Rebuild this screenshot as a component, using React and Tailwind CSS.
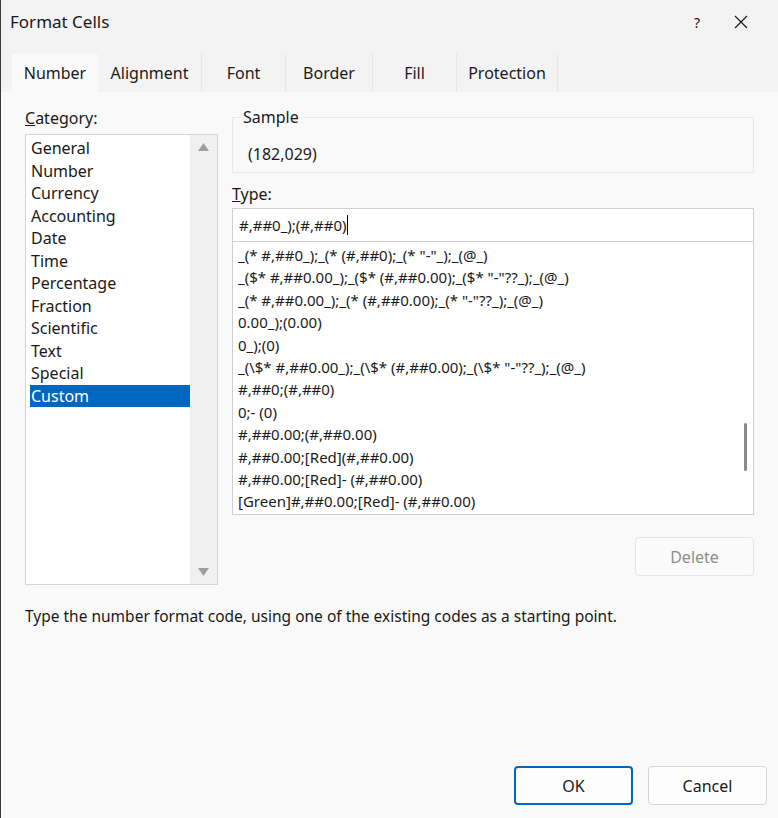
export default function App() {
  const cats = ['General', 'Number', 'Currency', 'Accounting', 'Date', 'Time', 'Percentage', 'Fraction', 'Scientific', 'Text', 'Special', 'Custom']
  const types = [
    '_(* #,##0_);_(* (#,##0);_(* "-"_);_(@_)',
    '_($* #,##0.00_);_($* (#,##0.00);_($* "-"??_);_(@_)',
    '_(* #,##0.00_);_(* (#,##0.00);_(* "-"??_);_(@_)',
    '0.00_);(0.00)',
    '0_);(0)',
    '_(\\$* #,##0.00_);_(\\$* (#,##0.00);_(\\$* "-"??_);_(@_)',
    '#,##0;(#,##0)',
    '0;- (0)',
    '#,##0.00;(#,##0.00)',
    '#,##0.00;[Red](#,##0.00)',
    '#,##0.00;[Red]- (#,##0.00)',
    '[Green]#,##0.00;[Red]- (#,##0.00)',
  ]
  const tabs = [['Alignment', 'w-[104px]'], ['Font', 'w-[84px]'], ['Border', 'w-[87px]'], ['Fill', 'w-[84px]'], ['Protection', 'w-[101px]']]

  return (
    <div className="w-[778px] h-[818px] bg-[#f9f9f9] text-[#1a1a1a] text-[16px] font-['Open_Sans',sans-serif] border-l border-[#3a3a3a] overflow-hidden flex flex-col">
      {/* Title bar */}
      <div className="h-[44px] flex items-center bg-[#f3f3f3] shrink-0">
        <span className="pl-[9px] text-[17px]">Format Cells</span>
        <span className="ml-auto text-[14px] w-[60px] text-center">?</span>
        <svg width="14" height="14" viewBox="0 0 14 14" className="mr-[30px] ml-[7px]">
          <path d="M1 1L13 13M13 1L1 13" stroke="#1a1a1a" strokeWidth="1.2" />
        </svg>
      </div>

      {/* Tabs */}
      <div className="flex pl-[11px] pt-[10px] h-[48px] shrink-0 bg-[#f3f3f3]">
        <div className="w-[86px] h-[38px] bg-[#f9f9f9] flex items-center justify-center">Number</div>
        {tabs.map(([t, w]) => (
          <div key={t} className={`${w} h-[38px] flex items-center justify-center border-r border-[#e5e5e5]`}>{t}</div>
        ))}
      </div>

      <div className="flex px-[24px] pt-[14px] gap-[14px]">
        {/* Category */}
        <div className="w-[193px]">
          <div className="h-[28px]"><span className="underline">C</span>ategory:</div>
          <div className="h-[451px] bg-white border border-[#d5d5d5] flex">
            <div className="flex-1 pl-[4px] pt-[2px]">
              {cats.map((c) => (
                <div key={c} className={`h-[22.5px] leading-[22.5px] pl-[1px] ${c === 'Custom' ? 'bg-[#0067c0] text-white' : ''}`}>{c}</div>
              ))}
            </div>
            <div className="w-[27px] bg-[#f0f0f0] flex flex-col justify-between items-center py-[8px]">
              <svg width="11" height="8" viewBox="0 0 11 8"><path d="M5.5 0L11 8H0Z" fill="#9e9e9e" /></svg>
              <svg width="11" height="8" viewBox="0 0 11 8"><path d="M0 0H11L5.5 8Z" fill="#9e9e9e" /></svg>
            </div>
          </div>
        </div>

        {/* Right */}
        <div className="w-[522px] pt-[2px]">
          <div className="relative h-[56px] border border-[#e8e8e8] mt-[9px]">
            <span className="absolute -top-[11px] left-[8px] bg-[#f9f9f9] px-[2px] leading-[20px]">Sample</span>
            <div className="pl-[15px] pt-[24px]">(182,029)</div>
          </div>
          <div className="mt-[9px] h-[26px]"><span className="underline">T</span>ype:</div>
          <div className="h-[34px] bg-white border border-[#cfcfcf] flex items-center pl-[6px] text-[15px]">
            #,##0_);(#,##0)<span className="w-px h-[20px] bg-black" />
          </div>
          <div className="h-[273px] bg-white border border-t-0 border-[#cfcfcf] flex text-[15px]">
            <div className="flex-1 pl-[5px] pt-[2px] overflow-hidden">
              {types.map((t) => (
                <div key={t} className="h-[22.4px] leading-[22.4px] whitespace-nowrap">{t}</div>
              ))}
            </div>
            <div className="w-[16px] flex justify-center pt-[181px]">
              <div className="w-[3px] h-[48px] rounded-full bg-[#8a8a8a]" />
            </div>
          </div>
          <div className="flex justify-end mt-[22px]">
            <div className="w-[119px] h-[39px] border border-[#e5e5e5] bg-[#fbfbfb] rounded-[4px] flex items-center justify-center text-[#8e8e8e]">Delete</div>
          </div>
        </div>
      </div>

      <div className="px-[24px] mt-[20px] text-[15.5px]">Type the number format code, using one of the existing codes as a starting point.</div>

      <div className="mt-auto mb-[13px] flex justify-end gap-[15px] pr-[11px]">
        <div className="w-[119px] h-[39px] bg-[#fdfdfd] border-2 border-[#0067c0] rounded-[4px] flex items-center justify-center">OK</div>
        <div className="w-[119px] h-[39px] bg-[#fdfdfd] border border-[#d5d5d5] rounded-[4px] flex items-center justify-center">Cancel</div>
      </div>
    </div>
  )
}
